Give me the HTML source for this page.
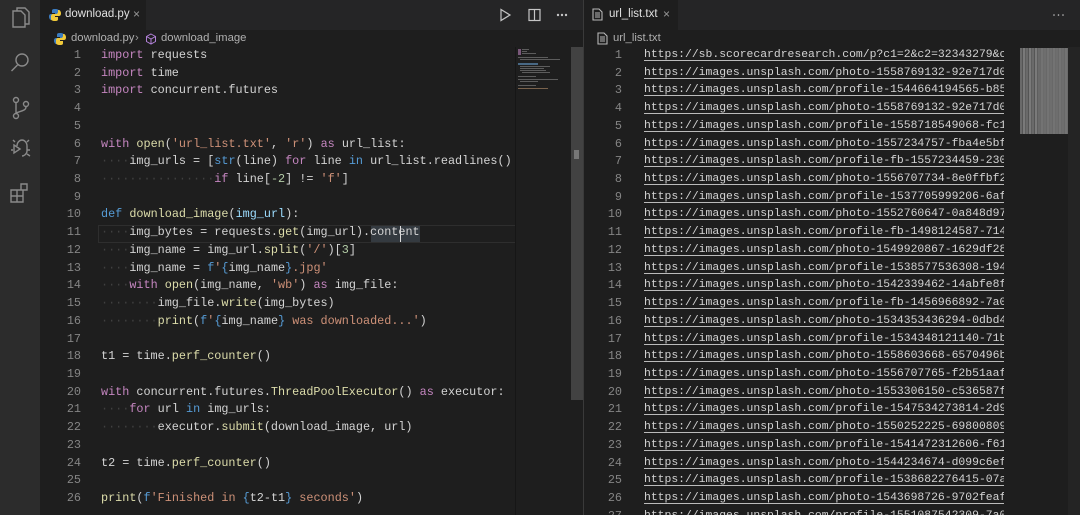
<!DOCTYPE html>
<html><head><meta charset="utf-8"><style>
*{margin:0;padding:0;box-sizing:border-box}
html,body{width:1080px;height:515px;overflow:hidden}
body{background:#1e1e1e;position:relative;font-family:"Liberation Sans",sans-serif}
.abs{position:absolute}
.code{position:absolute;font-family:"Liberation Mono",monospace;font-size:11.8px;line-height:17.72px;white-space:pre;color:#d4d4d4}
.ln{position:absolute;font-family:"Liberation Mono",monospace;font-size:11.8px;line-height:17.72px;white-space:pre;color:#858585;text-align:right}
.k{color:#c586c0}.f{color:#dcdcaa}.s{color:#ce9178}.b{color:#569cd6}.v{color:#9cdcfe}.n{color:#b5cea8}.d{color:#404040}
.u{text-decoration:underline;text-decoration-color:#bbb;text-underline-offset:3px}
</style></head><body>
<div class="abs" style="left:0;top:0;width:40px;height:515px;background:#2c2c2c"></div>
<svg class="abs" style="left:0;top:0" width="40" height="240" fill="none" stroke="#8a8a8a" stroke-width="1.4">
<path d="M13 11h8l4 4v12H13z M17 11v-3h8l4 4v12h-4"/>
<circle cx="22" cy="60" r="6"/><path d="M17.5 65l-6 6"/>
<circle cx="16" cy="100" r="2.5"/><circle cx="16" cy="116" r="2.5"/><circle cx="26" cy="104" r="2.5"/><path d="M16 103v10 M26 107c0 5-10 4-10 7"/>
<path d="M14 145l6 4-6 4z M17 146c0-4 3-6 5-6s5 2 5 6v5c0 3-3 5-5 5 M13 150h-2 M27 150h3 M27 154l3 2 M15 142l-2-2 M27 142l2-2"/>
<path d="M11 190h6v6h-6z M17 190h6v6h-6z M11 196h6v6h-6z M17 196h6v6h-6z M21 184h6v6h-6z"/>
</svg>
<div class="abs" style="left:40px;top:0;width:543px;height:30px;background:#252526"></div>
<div class="abs" style="left:40px;top:0;width:106px;height:30px;background:#1e1e1e"></div>
<svg class="abs" style="left:49px;top:9px" width="12" height="12"><path d="M6 0C3 0 3 1 3 2v2h3v1H2C0 5 0 7 0 8s1 3 2 3h1V9c0-1 1-2 2-2h3c1 0 2-1 2-2V2c0-1-1-2-4-2z" fill="#3b7bbf"/><path d="M6 12c3 0 3-1 3-2V8H6V7h4c2 0 2-2 2-3s-1-3-2-3H9v2c0 1-1 2-2 2H4C3 5 2 6 2 7v3c0 1 1 2 4 2z" fill="#f0c93a"/></svg>
<div class="abs" style="left:65px;top:8px;font-size:11.5px;color:#e0e0e0">download.py</div>
<div class="abs" style="left:133px;top:7px;font-size:12px;color:#999">×</div>
<svg class="abs" style="left:498px;top:8px" width="70" height="14" fill="none" stroke="#c5c5c5" stroke-width="1.2"><path d="M3 1.5l9 5.5-9 5.5z"/><rect x="31" y="1.5" width="11" height="11"/><path d="M36.5 1.5v11"/><circle cx="60" cy="7" r=".6" fill="#c5c5c5"/><circle cx="64" cy="7" r=".6" fill="#c5c5c5"/><circle cx="68" cy="7" r=".6" fill="#c5c5c5"/></svg>
<svg class="abs" style="left:54px;top:33px" width="12" height="12"><path d="M6 0C3 0 3 1 3 2v2h3v1H2C0 5 0 7 0 8s1 3 2 3h1V9c0-1 1-2 2-2h3c1 0 2-1 2-2V2c0-1-1-2-4-2z" fill="#3b7bbf"/><path d="M6 12c3 0 3-1 3-2V8H6V7h4c2 0 2-2 2-3s-1-3-2-3H9v2c0 1-1 2-2 2H4C3 5 2 6 2 7v3c0 1 1 2 4 2z" fill="#f0c93a"/></svg>
<div class="abs" style="left:71px;top:32px;font-size:11.3px;color:#b0b0b0">download.py</div>
<div class="abs" style="left:135px;top:32px;font-size:11.3px;color:#999">›</div>
<svg class="abs" style="left:145px;top:33px" width="12" height="12" fill="none" stroke="#b180d7" stroke-width="1"><path d="M6 1l4.5 2.5v5L6 11 1.5 8.5v-5z M1.5 3.5L6 6l4.5-2.5 M6 6v5"/></svg>
<div class="abs" style="left:161px;top:32px;font-size:11.3px;color:#b0b0b0">download_image</div>
<div class="abs" style="left:98px;top:225px;width:418px;height:18px;border:1px solid #2e2e2e"></div>
<div class="abs" style="left:371px;top:226px;width:49px;height:16px;background:#343a40"></div>
<div class="abs" style="left:400px;top:226px;width:1px;height:16px;background:#ddd"></div>
<div class="ln" style="left:50px;top:47px;width:31px">1
2
3
4
5
6
7
8
9
10
11
12
13
14
15
16
17
18
19
20
21
22
23
24
25
26</div>
<div class="code" style="left:101px;top:47px;width:414px;overflow:hidden"><span class="k">import</span> requests
<span class="k">import</span> time
<span class="k">import</span> concurrent.futures


<span class="k">with</span> <span class="f">open</span>(<span class="s">'url_list.txt'</span>, <span class="s">'r'</span>) <span class="k">as</span> url_list:
<span class="d">····</span>img_urls = [<span class="b">str</span>(line) <span class="k">for</span> line <span class="b">in</span> url_list.readlines()
<span class="d">················</span><span class="k">if</span> line[<span class="n">-2</span>] != <span class="s">'f'</span>]

<span class="b">def</span> <span class="f">download_image</span>(<span class="v">img_url</span>):
<span class="d">····</span>img_bytes = requests.<span class="f">get</span>(img_url).content
<span class="d">····</span>img_name = img_url.<span class="f">split</span>(<span class="s">'/'</span>)[<span class="n">3</span>]
<span class="d">····</span>img_name = <span class="b">f</span><span class="s">'</span><span class="b">{</span>img_name<span class="b">}</span><span class="s">.jpg'</span>
<span class="d">····</span><span class="k">with</span> <span class="f">open</span>(img_name, <span class="s">'wb'</span>) <span class="k">as</span> img_file:
<span class="d">········</span>img_file.<span class="f">write</span>(img_bytes)
<span class="d">········</span><span class="f">print</span>(<span class="b">f</span><span class="s">'</span><span class="b">{</span>img_name<span class="b">}</span><span class="s"> was downloaded...'</span>)

t1 = time.<span class="f">perf_counter</span>()

<span class="k">with</span> concurrent.futures.<span class="f">ThreadPoolExecutor</span>() <span class="k">as</span> executor:
<span class="d">····</span><span class="k">for</span> url <span class="b">in</span> img_urls:
<span class="d">········</span>executor.<span class="f">submit</span>(download_image, url)

t2 = time.<span class="f">perf_counter</span>()

<span class="f">print</span>(<span class="b">f</span><span class="s">'Finished in </span><span class="b">{</span>t2-t1<span class="b">}</span><span class="s"> seconds'</span>)</div>
<div class="abs" style="left:515px;top:47px;width:1px;height:468px;background:#161616"></div>
<svg class="abs" style="left:518px;top:47px" width="50" height="50" fill="#777" opacity=".7"><rect x="0" y="2" width="3" height="6" fill="#a070a0"/><rect x="4" y="2" width="7" height="1"/><rect x="4" y="4" width="5" height="1"/><rect x="4" y="6" width="14" height="1"/><rect x="0" y="10" width="30" height="1"/><rect x="2" y="12" width="40" height="1"/><rect x="0" y="16" width="20" height="2" fill="#5a88b0"/><rect x="2" y="19" width="30" height="1"/><rect x="2" y="21" width="24" height="1"/><rect x="2" y="23" width="26" height="1"/><rect x="4" y="25" width="28" height="1"/><rect x="0" y="29" width="18" height="1"/><rect x="0" y="32" width="40" height="1"/><rect x="2" y="34" width="18" height="1"/><rect x="0" y="38" width="18" height="1"/><rect x="0" y="41" width="30" height="1" fill="#a08060"/></svg>
<div class="abs" style="left:571px;top:47px;width:12px;height:353px;background:#424242"></div>
<div class="abs" style="left:574px;top:150px;width:5px;height:9px;background:#777"></div>
<div class="abs" style="left:583px;top:0;width:1px;height:515px;background:#3a3a3a"></div>
<div class="abs" style="left:584px;top:0;width:496px;height:30px;background:#252526"></div>
<div class="abs" style="left:584px;top:0;width:94px;height:30px;background:#1e1e1e"></div>
<svg class="abs" style="left:592px;top:8px" width="11" height="13" fill="none" stroke="#b8b8b8" stroke-width="1.1"><path d="M1 1h6l3 3v8H1z M3 5h5 M3 7h5 M3 9h5"/></svg>
<div class="abs" style="left:609px;top:8px;font-size:11.5px;color:#e0e0e0">url_list.txt</div>
<div class="abs" style="left:663px;top:7px;font-size:12px;color:#999">×</div>
<svg class="abs" style="left:1052px;top:13px" width="14" height="4" fill="#c5c5c5"><circle cx="2" cy="2" r=".8"/><circle cx="6.5" cy="2" r=".8"/><circle cx="11" cy="2" r=".8"/></svg>
<svg class="abs" style="left:597px;top:32px" width="11" height="13" fill="none" stroke="#b8b8b8" stroke-width="1.1"><path d="M1 1h6l3 3v8H1z M3 5h5 M3 7h5 M3 9h5"/></svg>
<div class="abs" style="left:613px;top:32px;font-size:11.3px;color:#b0b0b0">url_list.txt</div>
<div class="ln" style="left:590px;top:47px;width:32px">1
2
3
4
5
6
7
8
9
10
11
12
13
14
15
16
17
18
19
20
21
22
23
24
25
26
27</div>
<div class="code u" style="left:644px;top:47px;width:360px;overflow:hidden;height:468px;font-size:11.4px">https://sb.scorecardresearch.com/p?c1=2&amp;c2=32343279&amp;c
https://images.unsplash.com/photo-1558769132-92e717d0
https://images.unsplash.com/profile-1544664194565-b85
https://images.unsplash.com/photo-1558769132-92e717d0
https://images.unsplash.com/profile-1558718549068-fc1
https://images.unsplash.com/photo-1557234757-fba4e5bf
https://images.unsplash.com/profile-fb-1557234459-230
https://images.unsplash.com/photo-1556707734-8e0ffbf2
https://images.unsplash.com/profile-1537705999206-6af
https://images.unsplash.com/photo-1552760647-0a848d97
https://images.unsplash.com/profile-fb-1498124587-714
https://images.unsplash.com/photo-1549920867-1629df28
https://images.unsplash.com/profile-1538577536308-194
https://images.unsplash.com/photo-1542339462-14abfe8f
https://images.unsplash.com/profile-fb-1456966892-7a0
https://images.unsplash.com/photo-1534353436294-0dbd4
https://images.unsplash.com/profile-1534348121140-71b
https://images.unsplash.com/photo-1558603668-6570496b
https://images.unsplash.com/photo-1556707765-f2b51aaf
https://images.unsplash.com/photo-1553306150-c536587f
https://images.unsplash.com/profile-1547534273814-2d9
https://images.unsplash.com/photo-1550252225-69800809
https://images.unsplash.com/profile-1541472312606-f61
https://images.unsplash.com/photo-1544234674-d099c6ef
https://images.unsplash.com/profile-1538682276415-07a
https://images.unsplash.com/photo-1543698726-9702feaf
https://images.unsplash.com/profile-1551087542309-7a0</div>
<div class="abs" style="left:1020px;top:48px;width:48px;height:86px;background:repeating-linear-gradient(90deg,#6a6a6a 0 2px,#555 2px 3px,#7a7a7a 3px 5px,#5e5e5e 5px 6px)"></div>
<div class="abs" style="left:1040px;top:48px;width:28px;height:86px;background:#707070;opacity:.7"></div>
<div class="abs" style="left:1068px;top:47px;width:12px;height:468px;background:#242424"></div>
</body></html>
